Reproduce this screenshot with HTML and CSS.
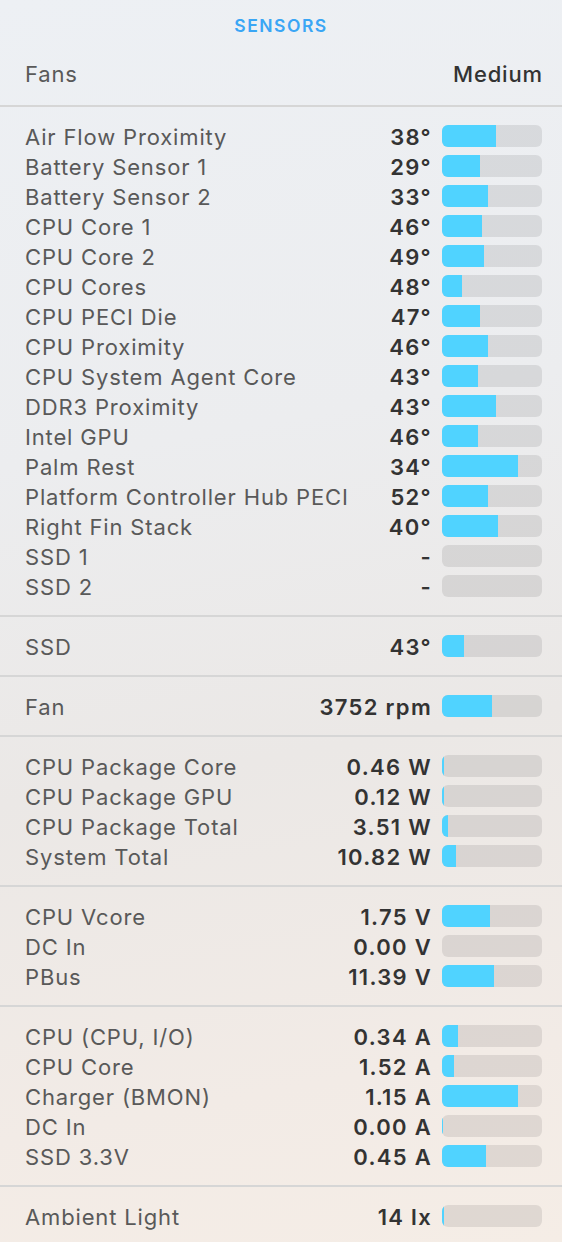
FILE: index.html
```html
<!DOCTYPE html>
<html>
<head>
<meta charset="utf-8">
<link rel="stylesheet" href="styles.css">
</head>
<body>
<div class="panel">
  <div class="title">SENSORS</div>
  <div class="section top">
    <div class="row"><span class="label">Fans</span><span class="mode">Medium</span></div>
  </div>
  <div class="section">
    <div class="row"><span class="label">Air Flow Proximity</span><span class="value">38°</span><span class="bar"><span class="fill" style="width:54px"></span></span></div>
    <div class="row"><span class="label">Battery Sensor 1</span><span class="value">29°</span><span class="bar"><span class="fill" style="width:38px"></span></span></div>
    <div class="row"><span class="label">Battery Sensor 2</span><span class="value">33°</span><span class="bar"><span class="fill" style="width:46px"></span></span></div>
    <div class="row"><span class="label">CPU Core 1</span><span class="value">46°</span><span class="bar"><span class="fill" style="width:40px"></span></span></div>
    <div class="row"><span class="label">CPU Core 2</span><span class="value">49°</span><span class="bar"><span class="fill" style="width:42px"></span></span></div>
    <div class="row"><span class="label">CPU Cores</span><span class="value">48°</span><span class="bar"><span class="fill" style="width:20px"></span></span></div>
    <div class="row"><span class="label">CPU PECI Die</span><span class="value">47°</span><span class="bar"><span class="fill" style="width:38px"></span></span></div>
    <div class="row"><span class="label">CPU Proximity</span><span class="value">46°</span><span class="bar"><span class="fill" style="width:46px"></span></span></div>
    <div class="row"><span class="label">CPU System Agent Core</span><span class="value">43°</span><span class="bar"><span class="fill" style="width:36px"></span></span></div>
    <div class="row"><span class="label">DDR3 Proximity</span><span class="value">43°</span><span class="bar"><span class="fill" style="width:54px"></span></span></div>
    <div class="row"><span class="label">Intel GPU</span><span class="value">46°</span><span class="bar"><span class="fill" style="width:36px"></span></span></div>
    <div class="row"><span class="label">Palm Rest</span><span class="value">34°</span><span class="bar"><span class="fill" style="width:76px"></span></span></div>
    <div class="row"><span class="label">Platform Controller Hub PECI</span><span class="value">52°</span><span class="bar"><span class="fill" style="width:46px"></span></span></div>
    <div class="row"><span class="label">Right Fin Stack</span><span class="value">40°</span><span class="bar"><span class="fill" style="width:56px"></span></span></div>
    <div class="row"><span class="label">SSD 1</span><span class="value">-</span><span class="bar"></span></div>
    <div class="row"><span class="label">SSD 2</span><span class="value">-</span><span class="bar"></span></div>
  </div>
  <div class="section">
    <div class="row"><span class="label">SSD</span><span class="value">43°</span><span class="bar"><span class="fill" style="width:22px"></span></span></div>
  </div>
  <div class="section">
    <div class="row"><span class="label">Fan</span><span class="value">3752 rpm</span><span class="bar"><span class="fill" style="width:50px"></span></span></div>
  </div>
  <div class="section">
    <div class="row"><span class="label">CPU Package Core</span><span class="value">0.46 W</span><span class="bar"><span class="fill" style="width:2px"></span></span></div>
    <div class="row"><span class="label">CPU Package GPU</span><span class="value">0.12 W</span><span class="bar"><span class="fill" style="width:2px"></span></span></div>
    <div class="row"><span class="label">CPU Package Total</span><span class="value">3.51 W</span><span class="bar"><span class="fill" style="width:6px"></span></span></div>
    <div class="row"><span class="label">System Total</span><span class="value">10.82 W</span><span class="bar"><span class="fill" style="width:14px"></span></span></div>
  </div>
  <div class="section">
    <div class="row"><span class="label">CPU Vcore</span><span class="value">1.75 V</span><span class="bar"><span class="fill" style="width:48px"></span></span></div>
    <div class="row"><span class="label">DC In</span><span class="value">0.00 V</span><span class="bar"></span></div>
    <div class="row"><span class="label">PBus</span><span class="value">11.39 V</span><span class="bar"><span class="fill" style="width:52px"></span></span></div>
  </div>
  <div class="section">
    <div class="row"><span class="label">CPU (CPU, I/O)</span><span class="value">0.34 A</span><span class="bar"><span class="fill" style="width:16px"></span></span></div>
    <div class="row"><span class="label">CPU Core</span><span class="value">1.52 A</span><span class="bar"><span class="fill" style="width:12px"></span></span></div>
    <div class="row"><span class="label">Charger (BMON)</span><span class="value">1.15 A</span><span class="bar"><span class="fill" style="width:76px"></span></span></div>
    <div class="row"><span class="label">DC In</span><span class="value">0.00 A</span><span class="bar"><span class="fill" style="width:1px"></span></span></div>
    <div class="row"><span class="label">SSD 3.3V</span><span class="value">0.45 A</span><span class="bar"><span class="fill" style="width:44px"></span></span></div>
  </div>
  <div class="section last">
    <div class="row"><span class="label">Ambient Light</span><span class="value">14 lx</span><span class="bar"><span class="fill" style="width:2px"></span></span></div>
  </div>
</div>
</body>
</html>
```
FILE: styles.css
```css
html, body {
  margin: 0;
  padding: 0;
}
body {
  width: 562px;
  height: 1242px;
  overflow: hidden;
  background: linear-gradient(170deg, #edf0f4 0%, #ecedef 35%, #ebe8e6 60%, #f2ebe6 85%, #f5ede6 100%);
  font-family: Inter, "Liberation Sans", Arial, sans-serif;
}
.panel {
  display: flex;
  flex-direction: column;
}
.title {
  height: 49px;
  padding-top: 1px;
  box-sizing: border-box;
  display: flex;
  align-items: center;
  justify-content: center;
  color: #3aa6f5;
  font-size: 17.5px;
  font-weight: 600;
  letter-spacing: 1.5px;
}
.section {
  padding: 14px 20px 14px 25px;
  border-bottom: 2px solid #d6d6d6;
  display: flex;
  flex-direction: column;
}
.section.top {
  padding-top: 9px;
  padding-bottom: 17px;
}
.section.last {
  border-bottom: none;
}
.row {
  height: 30px;
  display: flex;
  align-items: center;
  font-size: 22px;
  letter-spacing: 0.85px;
}
.label,
.value,
.mode {
  padding-top: 2px;
}
.label {
  flex: 1;
  color: #595959;
  white-space: nowrap;
}
.mode {
  color: #333;
  font-weight: 500;
  margin-right: -1px;
}
.value {
  color: #333;
  font-weight: 600;
  letter-spacing: 1.3px;
  margin-right: 10px;
  white-space: nowrap;
}
.bar {
  width: 100px;
  height: 22px;
  border-radius: 6px;
  background: rgba(0, 0, 0, 0.085);
  overflow: hidden;
  display: flex;
}
.fill {
  height: 100%;
  background: #50d3ff;
}
```
